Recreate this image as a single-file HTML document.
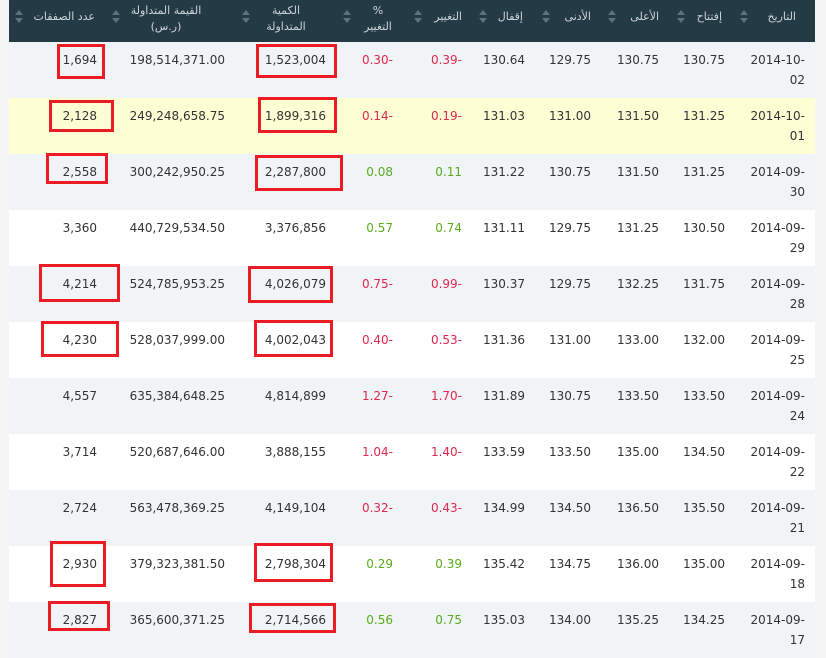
<!DOCTYPE html>
<html><head><meta charset="utf-8"><style>
body{margin:0;width:826px;height:620px;overflow:hidden;background:#f5f5f5;font-family:"DejaVu Sans","Noto Sans CJK SC",sans-serif;position:relative}
.hd{position:absolute;left:9px;top:0;width:806px;height:42px;background:#243a45}
.h{position:absolute;color:#ccd4d8;font-size:11px;white-space:nowrap;text-align:center;line-height:16px}
.ar{position:absolute;width:0;height:0;border-left:4px solid transparent;border-right:4px solid transparent}
.up{border-bottom:5px solid #5f717a}.dn{border-top:5px solid #5f717a}
.r{position:absolute;left:9px;width:806px;height:56px}
.t{position:absolute;font-size:12px;color:#333;white-space:nowrap;text-align:right;line-height:20px}
.red{color:#e0284f}.grn{color:#5aab1e}
.b{position:absolute;border:3px solid #ed1c24;box-sizing:border-box}
</style></head><body>
<div class="hd"></div>
<div class="h" style="right:731px;top:9px">عدد الصفقات</div>
<div class="h" style="right:600px;top:3px;width:120px">القيمة المتداولة<br>(ر.س)</div>
<div class="h" style="right:500px;top:3px;width:80px">الكمية<br>المتداولة</div>
<div class="h" style="right:428px;top:3px;width:40px">%<br>التغيير</div>
<div class="h" style="right:364px;top:9px">التغيير</div>
<div class="h" style="right:303px;top:9px">إقفال</div>
<div class="h" style="right:235px;top:9px">الأدنى</div>
<div class="h" style="right:167px;top:9px">الأعلى</div>
<div class="h" style="right:104px;top:9px">إفتتاح</div>
<div class="h" style="right:30px;top:9px">التاريخ</div>
<div id="arrows"></div>
<script>
var ax=[19,116,246,347,418,483,546,612,681,744],s='';
ax.forEach(function(x){s+='<div class="ar up" style="left:'+(x-4)+'px;top:10px"></div><div class="ar dn" style="left:'+(x-4)+'px;top:18px"></div>';});
document.getElementById('arrows').innerHTML=s;
var rows=[
['2014-10-02','130.75','130.75','129.75','130.64','0.39-','0.30-','1,523,004','198,514,371.00','1,694','#f0f4f7','r'],
['2014-10-01','131.25','131.50','131.00','131.03','0.19-','0.14-','1,899,316','249,248,658.75','2,128','#fefed5','r'],
['2014-09-30','131.25','131.50','130.75','131.22','0.11','0.08','2,287,800','300,242,950.25','2,558','#f0f4f7','g'],
['2014-09-29','130.50','131.25','129.75','131.11','0.74','0.57','3,376,856','440,729,534.50','3,360','#ffffff','g'],
['2014-09-28','131.75','132.25','129.75','130.37','0.99-','0.75-','4,026,079','524,785,953.25','4,214','#f0f4f7','r'],
['2014-09-25','132.00','133.00','131.00','131.36','0.53-','0.40-','4,002,043','528,037,999.00','4,230','#ffffff','r'],
['2014-09-24','133.50','133.50','130.75','131.89','1.70-','1.27-','4,814,899','635,384,648.25','4,557','#f0f4f7','r'],
['2014-09-22','134.50','135.00','133.50','133.59','1.40-','1.04-','3,888,155','520,687,646.00','3,714','#ffffff','r'],
['2014-09-21','135.50','136.50','134.50','134.99','0.43-','0.32-','4,149,104','563,478,369.25','2,724','#f0f4f7','r'],
['2014-09-18','135.00','136.00','134.75','135.42','0.39','0.29','2,798,304','379,323,381.50','2,930','#ffffff','g'],
['2014-09-17','134.25','135.25','134.00','135.03','0.75','0.56','2,714,566','365,600,371.25','2,827','#f0f4f7','g']];
var rx=[21,101,167,235,301,364,433,500,601,729];
var h='';
rows.forEach(function(r,i){
 var y=42+i*56;
 h+='<div class="r" style="top:'+y+'px;background:'+r[10]+'"></div>';
 var c=r[11]=='r'?'red':'grn';
 var d=r[0].split('-');
 h+='<div class="t" style="right:'+rx[0]+'px;top:'+(y+8)+'px">'+d[0]+'-'+d[1]+'-<br>'+d[2]+'</div>';
 for(var k=1;k<10;k++){
  var cl=(k==5||k==6)?' '+c:'';
  h+='<div class="t'+cl+'" style="right:'+rx[k]+'px;top:'+(y+8)+'px">'+r[k]+'</div>';
 }
});
var bx=[[57,44,48,35,256,44,81,34],[49,100,65,32,258,97,79,36],[46,153,62,31,255,155,88,36],null,[39,264,81,38,248,266,85,37],[41,321,78,36,254,320,79,37],null,null,null,[50,541,56,46,254,543,79,39],[48,601,62,30,249,603,87,30]];
bx.forEach(function(b){if(!b)return;
 h+='<div class="b" style="left:'+b[0]+'px;top:'+b[1]+'px;width:'+b[2]+'px;height:'+b[3]+'px"></div>';
 h+='<div class="b" style="left:'+b[4]+'px;top:'+b[5]+'px;width:'+b[6]+'px;height:'+b[7]+'px"></div>';});
document.write(h);
</script>
</body></html>
